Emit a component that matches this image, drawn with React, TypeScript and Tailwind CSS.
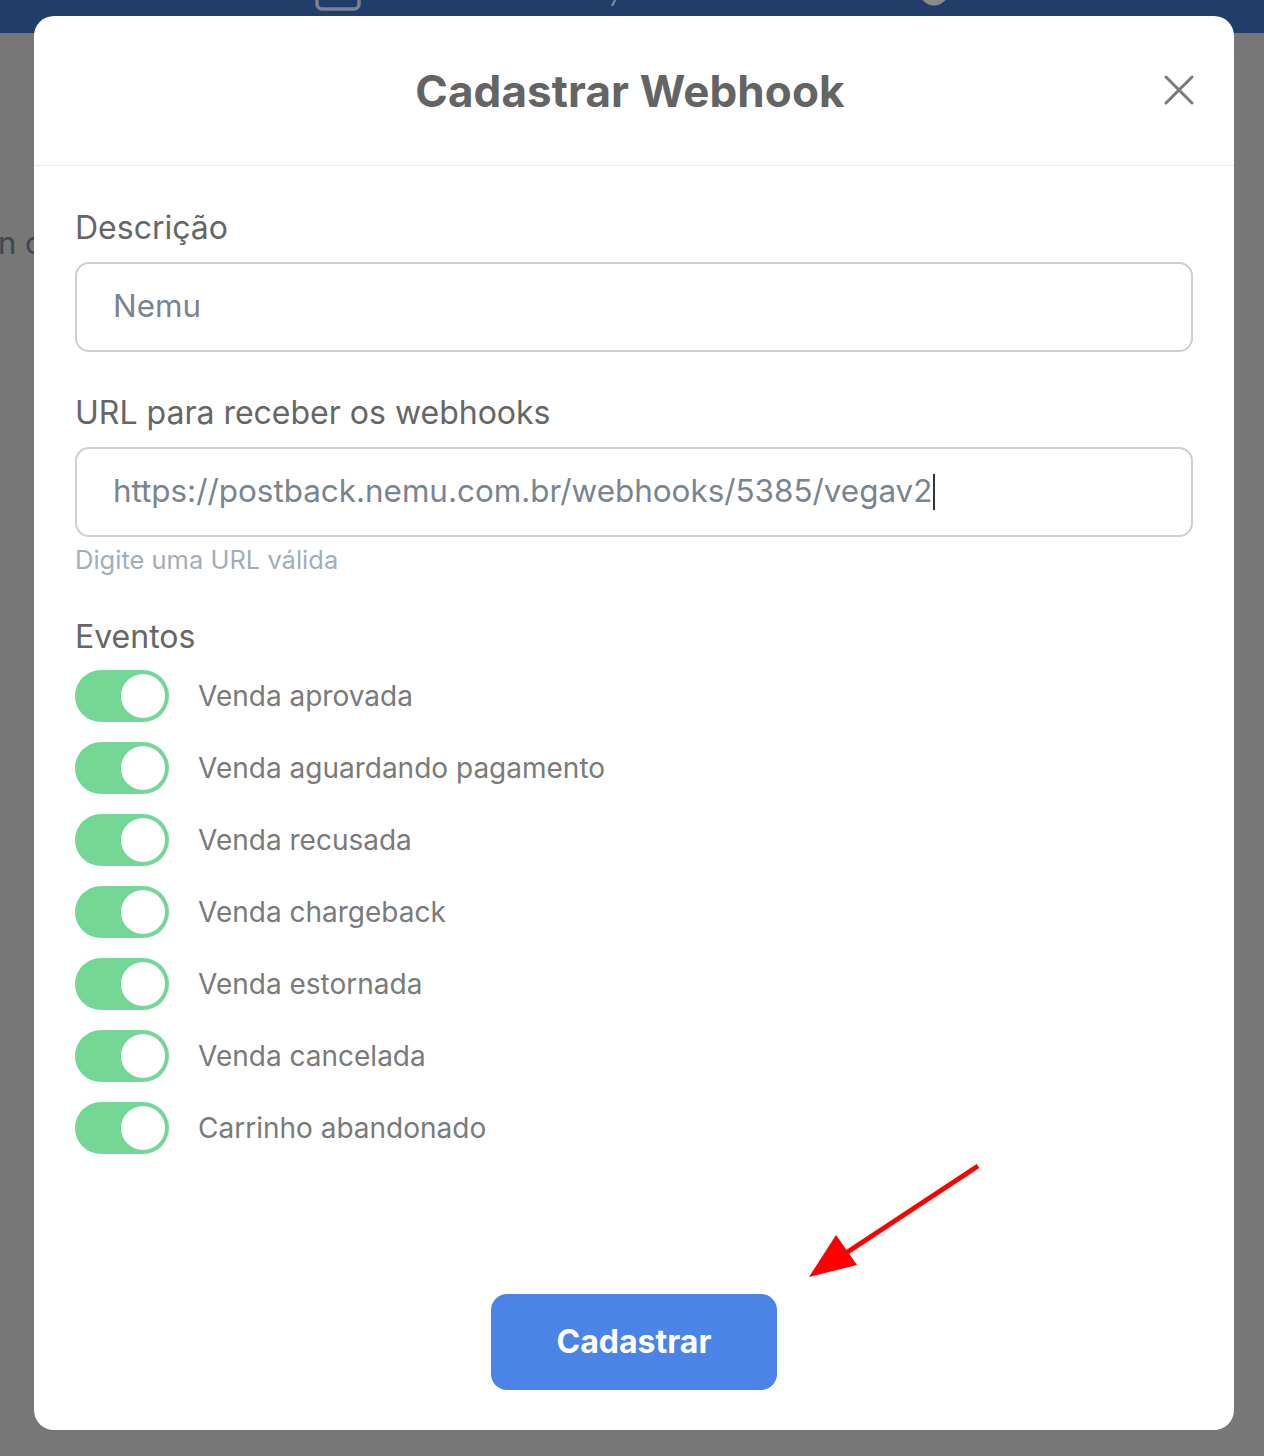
const events = [
  "Venda aprovada",
  "Venda aguardando pagamento",
  "Venda recusada",
  "Venda chargeback",
  "Venda estornada",
  "Venda cancelada",
  "Carrinho abandonado",
]

const Toggle = () => (
  <div className="flex h-[52px] w-[94px] shrink-0 items-center justify-end rounded-full bg-[#74d796] p-1">
    <div className="h-11 w-11 rounded-full bg-white" />
  </div>
)

const App = () => {
  return (
    <div className="relative h-[1456px] w-full overflow-hidden bg-[#777777] font-['Inter',sans-serif]">
      {/* dimmed page behind the overlay */}
      <div className="relative h-[33px] bg-[#233d6b]">
        <svg className="absolute left-[315px] top-[-16px]" width="46" height="27" viewBox="0 0 46 27" fill="none">
          <rect x="2" y="2" width="42" height="23" rx="5" stroke="#7b8190" strokeWidth="3.5" />
          <rect x="20" y="4" width="6" height="12" rx="2" fill="#7b8190" />
        </svg>
        <svg className="absolute left-[609px] top-[-4px]" width="10" height="11" viewBox="0 0 10 11">
          <path d="M8 0 L3 10" stroke="#7b8190" strokeWidth="2.5" />
        </svg>
        <svg className="absolute left-[919px] top-[-24px]" width="30" height="30" viewBox="0 0 30 30">
          <circle cx="15" cy="15" r="14.5" fill="#8a8a8a" />
        </svg>
      </div>
      <span className="absolute left-[-2px] top-[220px] text-[31px] text-[#3d4752]">n c</span>

      {/* modal */}
      <div className="absolute left-[34px] top-4 flex h-[1414px] w-[1200px] flex-col rounded-[20px] bg-white">
        <div className="relative flex h-[150px] shrink-0 items-center justify-center border-b border-[#ebebeb]">
          <h1 className="ml-[-8px] text-[44px] font-bold tracking-[0.1px] text-[#646464]">Cadastrar Webhook</h1>
          <button className="absolute right-[39px] top-[58px] flex h-8 w-8 items-center justify-center">
            <svg width="30" height="30" viewBox="0 0 30 30">
              <path d="M2 2 L28 28 M28 2 L2 28" stroke="#7a7a7a" strokeWidth="3" strokeLinecap="round" />
            </svg>
          </button>
        </div>

        <div className="flex flex-1 flex-col px-[41px] pt-[44px] pb-10">
          <label className="mb-4 block text-[32px] leading-9 text-[#666666]">Descrição</label>
          <div className="flex h-[90px] items-center rounded-[14px] border-2 border-[#cfcfcf] px-[36px] text-[31.4px] text-[#79848f]">
            Nemu
          </div>

          <label className="mb-4 mt-[43px] block text-[32px] leading-9 text-[#666666]">URL para receber os webhooks</label>
          <div className="flex h-[90px] items-center rounded-[14px] border-2 border-[#cfcfcf] px-[36px] text-[31.4px] text-[#79848f]">
            <span>https://postback.nemu.com.br/webhooks/5385/vegav2</span>
            <span className="ml-px h-9 w-[1.5px] bg-[#333333]" />
          </div>
          <p className="mt-2 text-[25.5px] leading-[30px] text-[#a3adb8]">Digite uma URL válida</p>

          <label className="mt-[44px] block text-[32px] leading-9 text-[#666666]">Eventos</label>
          <div className="mt-[15px] flex flex-col gap-5">
            {events.map((ev) => (
              <div key={ev} className="flex items-center gap-[29px]">
                <Toggle />
                <span className="text-[28px] text-[#7a7a7a]">{ev}</span>
              </div>
            ))}
          </div>

          <div className="mt-auto flex justify-center">
            <button className="h-24 w-[286px] rounded-2xl bg-[#4a84e6] text-[32px] font-bold text-white">
              Cadastrar
            </button>
          </div>
        </div>

        {/* annotation arrow */}
        <svg className="absolute left-[736px] top-[1129px]" width="220" height="150" viewBox="770 1145 220 150">
          <path d="M978 1166 L840 1257" stroke="#ff0000" strokeWidth="5" />
          <path d="M809 1277 L836 1235 L857 1265 Z" fill="#ff0000" />
        </svg>
      </div>
    </div>
  )
}

export default App
